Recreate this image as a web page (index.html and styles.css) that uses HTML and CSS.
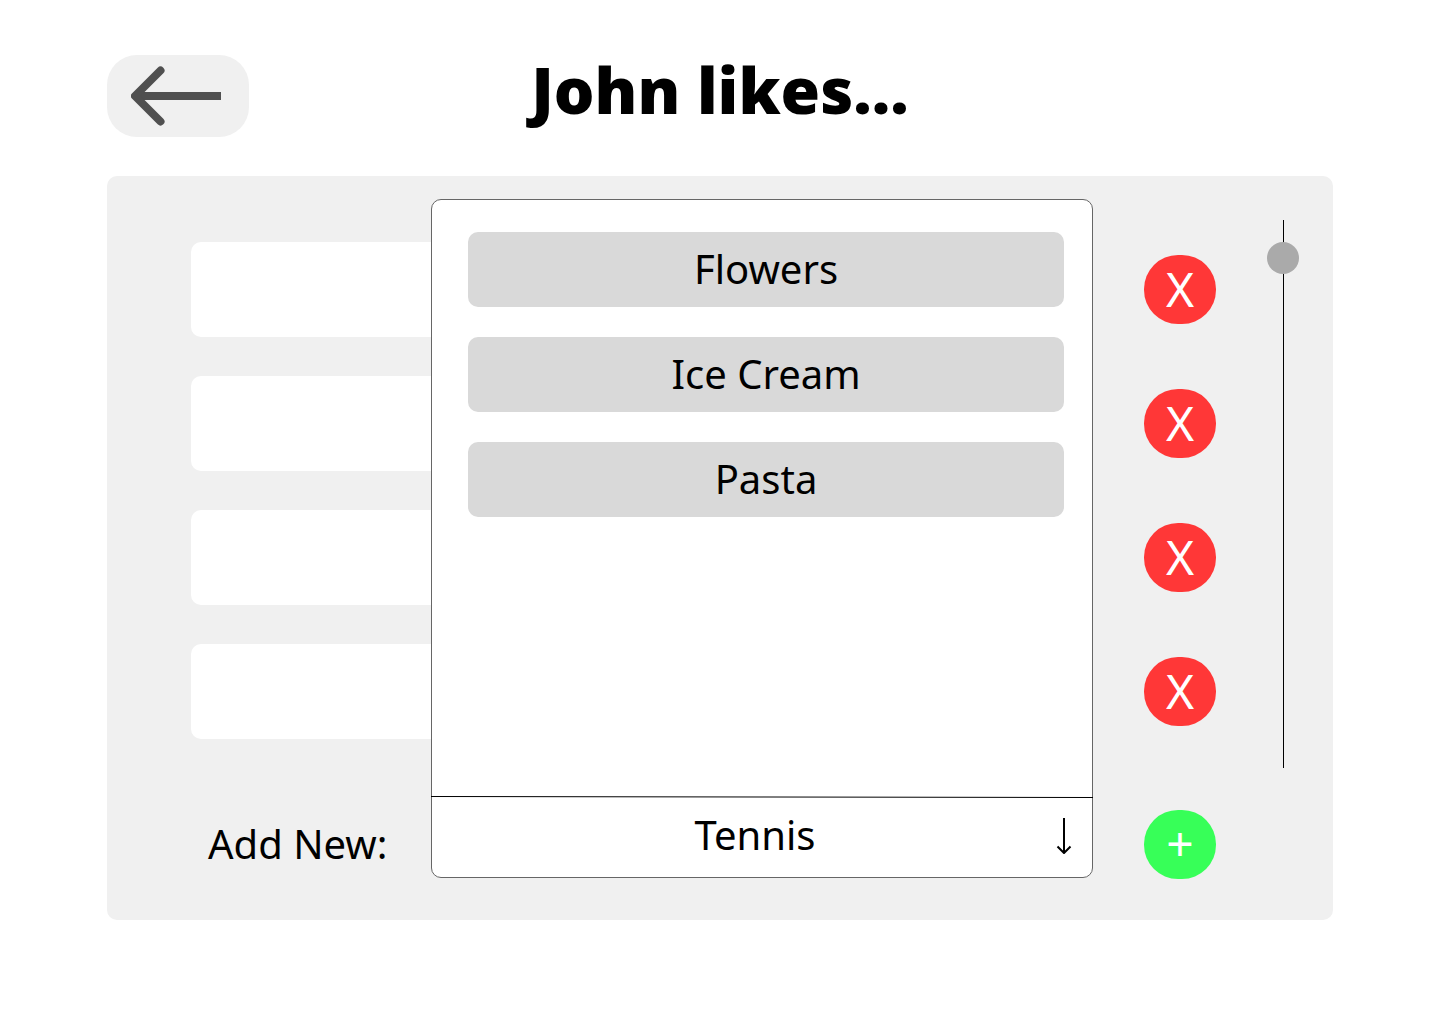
FILE: index.html
```html
<!DOCTYPE html>
<html lang="en">
<head>
<meta charset="utf-8">
<meta name="viewport" content="width=device-width, initial-scale=1">
<title>John likes...</title>
<link rel="stylesheet" href="styles.css">
</head>
<body>
<header class="header">
  <button class="back" type="button" aria-label="Back">
    <svg width="90" height="60" viewBox="0 0 90 60" fill="none" stroke="#505050" stroke-width="8" stroke-linejoin="round">
      <path d="M5 30H90"/>
      <path d="M29.5 4.500L4 30L29.500 55.500" stroke-linecap="round"/>
    </svg>
  </button>
  <h1 class="title">John likes...</h1>
</header>
<main class="panel">
  <div class="rows">
    <div class="row"><input class="like" type="text" aria-label="Like 1"><button class="round remove" type="button" aria-label="Remove like 1">X</button></div>
    <div class="row"><input class="like" type="text" aria-label="Like 2"><button class="round remove" type="button" aria-label="Remove like 2">X</button></div>
    <div class="row"><input class="like" type="text" aria-label="Like 3"><button class="round remove" type="button" aria-label="Remove like 3">X</button></div>
    <div class="row"><input class="like" type="text" aria-label="Like 4"><button class="round remove" type="button" aria-label="Remove like 4">X</button></div>
  </div>
  <input class="scroller" type="range" min="0" max="516" value="22" aria-label="Scroll likes">
  <form class="add">
    <label class="add-label" for="new-like">Add New:</label>
    <div class="picker">
      <div class="popup">
        <div class="options">
          <button class="option" type="button">Flowers</button>
          <button class="option" type="button">Ice Cream</button>
          <button class="option" type="button">Pasta</button>
        </div>
        <svg class="divider" viewBox="0 0 662 2" preserveAspectRatio="none" stroke="#000" aria-hidden="true"><path d="M0 0.500L662 1.500"/></svg>
        <div class="field">
          <input class="new-like" id="new-like" type="text" value="Tennis">
          <button class="toggle" type="button" aria-label="Toggle options">
            <svg width="16" height="36" viewBox="0 0 16 36" fill="none" stroke="#000" stroke-width="2"><path d="M8 0V35"/><path d="M1.500 28.500L8 35L14.500 28.500" stroke-linejoin="round"/></svg>
          </button>
        </div>
      </div>
    </div>
    <button class="round plus" type="button" aria-label="Add">+</button>
  </form>
</main>
</body>
</html>
```
FILE: styles.css
```css
* {
  box-sizing: border-box;
}

body {
  margin: 0;
  padding: 55px 107px;
  background: #fff;
  color: #000;
  font-family: "Noto Sans", sans-serif;
  font-size: 40px;
  line-height: 55px;
}

button,
input {
  margin: 0;
  padding: 0;
  border: 0;
  color: inherit;
  font: inherit;
}

button {
  cursor: pointer;
}

svg {
  display: block;
}

.header {
  display: grid;
  grid-template-columns: 142px 1fr 142px;
  align-items: start;
  margin-bottom: 39px;
}

.back {
  display: flex;
  align-items: center;
  height: 82px;
  padding-left: 24px;
  border-radius: 30px;
  background: #f0f0f0;
}

.title {
  margin: 0;
  font-family: "Open Sans", "Noto Sans", sans-serif;
  font-size: 64px;
  font-weight: 800;
  line-height: 70px;
  text-align: center;
}

.panel {
  display: grid;
  grid-template-columns: 1fr 32px;
  gap: 29px 51px;
  padding: 44px 34px 41px 84px;
  border-radius: 10px;
  background: #f0f0f0;
}

.rows {
  display: flex;
  flex-direction: column;
  gap: 39px;
  padding: 22px 0 29px;
}

.row {
  display: flex;
  align-items: center;
  gap: 51px;
}

.like {
  flex: 1;
  min-width: 0;
  height: 95px;
  padding: 0 24px;
  border-radius: 10px;
  background: #fff;
  text-align: center;
}

.round {
  flex: none;
  width: 72px;
  height: 69px;
  padding-bottom: 2px;
  border-radius: 34px;
  color: #fff;
  font-size: 48px;
  line-height: 66px;
}

.remove {
  background: #ff3737;
}

.plus {
  padding-bottom: 3px;
  background: #37ff58;
}

.scroller {
  appearance: none;
  writing-mode: vertical-lr;
  width: 32px;
  height: 100%;
  background: linear-gradient(#000, #000) 16px 0 / 1px 100% no-repeat;
}

.scroller::-webkit-slider-thumb {
  appearance: none;
  width: 32px;
  height: 32px;
  border-radius: 50%;
  background: #aaa;
}

.add {
  display: flex;
  align-items: flex-end;
  height: 82px;
}

.add-label {
  width: 240px;
  padding-left: 17px;
  line-height: 71px;
}

.picker {
  position: relative;
  flex: 1;
  align-self: flex-start;
  height: 81px;
  margin-right: 51px;
}

.popup {
  position: absolute;
  right: 0;
  bottom: 0;
  left: 0;
  border: 1px solid #666;
  border-radius: 10px;
  background: #fff;
}

.options {
  display: flex;
  flex-direction: column;
  gap: 30px;
  min-height: 596px;
  padding: 32px 28px 32px 36px;
}

.option {
  height: 75px;
  padding-bottom: 2px;
  border-radius: 10px;
  background: #d9d9d9;
}

.divider {
  width: calc(100% + 2px);
  height: 2px;
  margin: 0 -1px;
}

.field {
  display: flex;
  padding: 0 12px 4px 0;
}

.new-like {
  flex: 1;
  min-width: 0;
  height: 75px;
  padding: 0 0 2px 30px;
  background: none;
  text-align: center;
}

.toggle {
  display: flex;
  align-items: center;
  justify-content: center;
  width: 32px;
  background: none;
}
```
